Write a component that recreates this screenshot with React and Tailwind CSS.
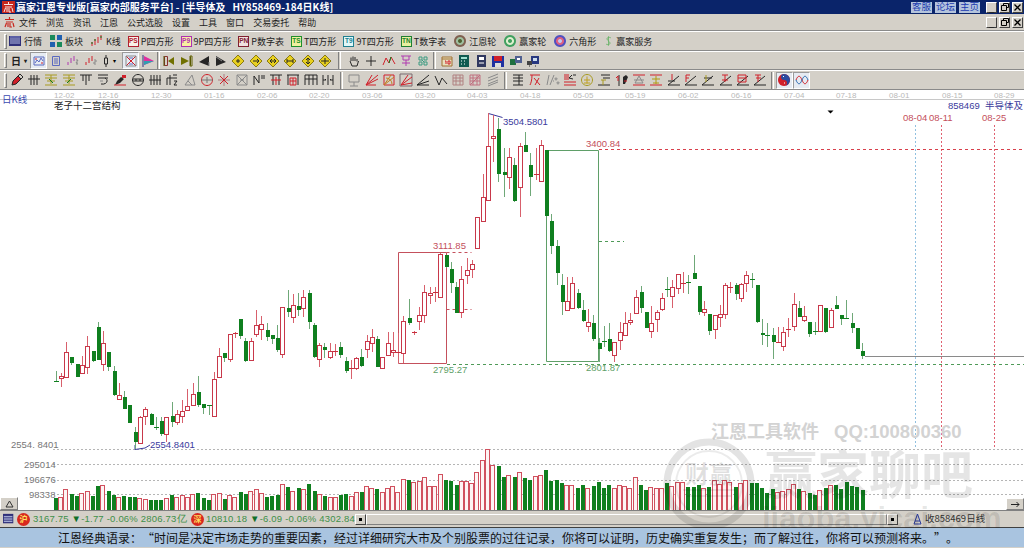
import React from 'react';

const R = '#d0202a', K = '#262626', Au = '#a89a20', G = '#8a8a8a', P = '#b07a80', Gn = '#0f7f1f', Y = '#e8d020';

// candles: [x, high, bodyTop, bodyBottom, low, colour] read off at the crop's origin
const place = (ox, oy, list) =>
  list.map(([x, hi, top, bot, lo, t]) => ({
    x: Math.round(ox + x / 3), hi: oy + hi / 3, top: oy + top / 3, bot: oy + bot / 3, lo: oy + lo / 3, t,
  }));

const candles = [
  ...place(40, 300, [
    [47, 212, 243, 245, 245, 'g'], [63, 220, 229, 235, 260, 'r'], [79, 126, 157, 233, 233, 'r'], [94, 170, 170, 188, 195, 'g'],
    [110, 193, 193, 232, 232, 'g'], [126, 168, 196, 221, 221, 'r'], [142, 108, 139, 201, 222, 'r'], [158, 153, 153, 183, 185, 'g'],
    [174, 65, 80, 180, 180, 'g'], [190, 92, 130, 192, 212, 'r'], [205, 155, 155, 200, 212, 'g'], [221, 198, 213, 284, 288, 'g'],
    [236, 248, 284, 295, 295, 'r'], [252, 272, 291, 326, 326, 'g'], [268, 315, 315, 368, 370, 'g'], [284, 380, 395, 426, 447, 'g'],
    [300, 348, 352, 430, 430, 'r'], [316, 322, 327, 349, 374, 'r'], [332, 340, 341, 373, 375, 'g'], [348, 352, 380, 381, 390, 'g'],
    [363, 352, 364, 402, 408, 'g'], [379, 350, 352, 402, 425, 'r'], [395, 307, 347, 364, 380, 'g'], [411, 330, 343, 368, 375, 'r'],
    [427, 300, 334, 350, 368, 'r'], [442, 267, 317, 330, 330, 'r'], [458, 248, 281, 313, 315, 'r'], [474, 228, 275, 315, 320, 'g'],
    [490, 311, 311, 323, 343, 'g'], [506, 316, 316, 320, 345, 'g'], [521, 216, 236, 346, 346, 'r'], [537, 145, 169, 231, 231, 'r'],
    [553, 160, 160, 175, 185, 'g'], [569, 103, 103, 179, 186, 'r'], [585, 95, 98, 99, 115, 'r'], [601, 58, 58, 108, 118, 'g'],
    [616, 115, 123, 184, 186, 'g'], [632, 115, 124, 181, 181, 'r'], [648, 30, 76, 104, 112, 'r'], [664, 47, 72, 88, 120, 'r'],
    [680, 70, 90, 110, 122, 'g'], [695, 105, 105, 118, 133, 'g'], [711, 76, 115, 150, 155, 'g'], [727, 22, 22, 163, 175, 'r'],
    [743, -30, 24, 36, 50, 'g'], [759, -18, 16, 52, 68, 'r'], [775, -20, 18, 30, 48, 'g'], [790, -30, -10, 24, 50, 'r'],
    [806, -30, -20, 68, 88, 'g'], [822, 68, 76, 172, 175, 'g'], [838, 130, 136, 177, 200, 'r'], [853, 128, 142, 152, 175, 'g'],
    [869, 128, 152, 170, 178, 'r'], [885, 133, 154, 155, 168, 'r'], [901, 125, 140, 163, 175, 'g'], [917, 172, 182, 213, 218, 'g'],
    [933, 180, 204, 205, 238, 'r'], [949, 172, 175, 205, 210, 'r'], [964, 148, 171, 197, 200, 'g'], [980, 105, 124, 149, 175, 'r'],
    [996, 88, 110, 128, 155, 'r'], [1011, 108, 117, 200, 200, 'g'], [1027, 170, 172, 206, 206, 'r'], [1043, 97, 130, 165, 165, 'r'],
    [1059, 97, 150, 156, 172, 'r'],
  ]),
  ...place(380, 105, [
    [54, 683, 741, 742, 775, 'r'], [70, 632, 648, 745, 775, 'r'], [86, 583, 638, 654, 660, 'g'], [102, 678, 680, 681, 690, 'r'],
    [118, 605, 629, 646, 675, 'r'], [133, 540, 562, 632, 655, 'r'], [149, 545, 564, 571, 597, 'r'], [165, 545, 560, 561, 592, 'r'],
    [181, 445, 448, 576, 578, 'r'], [197, 450, 450, 486, 490, 'g'], [213, 470, 492, 533, 563, 'g'], [228, 530, 546, 624, 624, 'g'],
    [244, 482, 523, 623, 640, 'r'], [260, 458, 496, 511, 538, 'r'], [276, 465, 478, 494, 518, 'r'], [292, 337, 337, 429, 429, 'r'],
    [308, 208, 275, 346, 346, 'r'], [324, 25, 122, 284, 284, 'r'], [340, 30, 94, 100, 170, 'r'], [355, 40, 72, 207, 230, 'g'],
    [371, 130, 200, 210, 275, 'g'], [387, 130, 157, 217, 252, 'r'], [403, 160, 181, 288, 290, 'g'], [419, 115, 124, 247, 335, 'r'],
    [435, 80, 121, 142, 142, 'g'], [451, 145, 180, 217, 272, 'g'], [467, 130, 206, 207, 225, 'r'], [482, 105, 119, 226, 226, 'r'],
    [498, 135, 135, 334, 334, 'g'], [514, 328, 347, 422, 448, 'g'], [530, 405, 424, 506, 540, 'g'], [545, 508, 540, 591, 630, 'g'],
    [561, 517, 587, 614, 618, 'r'], [577, 517, 535, 610, 612, 'r'], [593, 552, 564, 609, 612, 'g'], [608, 585, 614, 646, 650, 'g'],
    [624, 612, 652, 664, 682, 'r'], [640, 630, 655, 703, 708, 'g'], [656, 700, 715, 732, 770, 'g'],
  ]),
  ...place(600, 240, [
    [11, 258, 302, 306, 320, 'g'], [27, 250, 297, 333, 335, 'g'], [43, 307, 307, 347, 366, 'r'], [59, 247, 277, 302, 330, 'r'],
    [75, 215, 250, 287, 287, 'r'], [91, 220, 241, 248, 255, 'r'], [107, 150, 172, 221, 221, 'r'], [122, 138, 157, 204, 218, 'g'],
    [138, 215, 215, 262, 262, 'g'], [154, 198, 250, 275, 295, 'r'], [170, 210, 217, 239, 275, 'r'], [185, 160, 175, 209, 212, 'r'],
    [201, 110, 146, 149, 170, 'g'], [217, 120, 142, 169, 205, 'r'], [233, 103, 103, 146, 162, 'r'], [249, 95, 128, 129, 160, 'r'],
    [265, 105, 125, 129, 163, 'g'], [281, 45, 100, 118, 118, 'g'], [296, 139, 139, 216, 225, 'g'], [312, 182, 206, 214, 228, 'r'],
    [328, 222, 222, 273, 285, 'g'], [344, 225, 225, 268, 298, 'r'], [360, 195, 222, 230, 262, 'r'], [375, 128, 134, 221, 238, 'r'],
    [391, 125, 141, 142, 158, 'r'], [407, 128, 134, 162, 180, 'g'], [423, 128, 131, 172, 185, 'r'], [439, 92, 106, 131, 155, 'r'],
    [455, 100, 116, 117, 143, 'g'], [470, 136, 136, 248, 248, 'g'], [486, 238, 279, 286, 316, 'g'], [502, 250, 285, 290, 320, 'g'],
    [518, 265, 285, 306, 358, 'g'], [533, 260, 307, 308, 308, 'r'], [549, 262, 277, 319, 332, 'r'], [565, 233, 267, 268, 290, 'r'],
    [581, 160, 193, 260, 272, 'r'], [597, 182, 205, 231, 232, 'g'], [613, 197, 229, 241, 245, 'r'], [628, 245, 245, 280, 292, 'g'],
    [644, 245, 273, 274, 285, 'g'], [660, 195, 195, 272, 272, 'r'], [676, 204, 204, 277, 280, 'g'], [692, 205, 211, 263, 265, 'r'],
    [707, 168, 195, 208, 208, 'g'], [723, 225, 225, 236, 255, 'g'], [739, 180, 235, 236, 238, 'g'], [755, 218, 250, 266, 278, 'g'],
    [771, 263, 263, 326, 328, 'g'], [786, 310, 333, 347, 357, 'g'],
  ]),
];

const volumes = [
  ...[[167,235,'g'],[183,232,'r'],[199,208,'r'],[215,222,'g'],[231,228,'g'],[247,220,'r'],[263,213,'r'],[279,228,'g'],[294,197,'g'],[310,195,'r'],[326,213,'g'],[342,224,'g'],[358,232,'r'],[373,229,'g'],[389,232,'g'],[405,231,'g'],[421,233,'r'],[437,238,'r'],[452,240,'g'],[468,240,'g'],[484,240,'g'],[500,233,'r'],[516,226,'g'],[532,232,'r'],[548,226,'r'],[564,232,'r'],[580,223,'r'],[595,220,'g'],[611,235,'g'],[627,240,'g'],[643,223,'r'],[659,220,'r'],[675,236,'g'],[690,226,'r'],[706,232,'r'],[722,217,'g'],[738,222,'g'],[754,213,'r'],[770,206,'r'],[786,220,'r'],[801,232,'g'],[817,229,'g'],[833,225,'g'],[849,191,'r'],[865,202,'g'],[880,212,'r'],[896,204,'g'],[912,206,'r'],[928,193,'g'],[944,214,'g'],[960,223,'r'],[976,229,'g'],[992,232,'r'],[1008,232,'r'],[1023,226,'g'],[1039,222,'g'],[1055,229,'r'],[1070,217,'r'],[1085,217,'g'],[1100,197,'r'],[1116,203,'r'],[1132,208,'g'],[1148,215,'r'],[1164,203,'r'],[1180,199,'r'],[1195,215,'r'],[1211,178,'r'],[1227,180,'g'],[1243,187,'r'],[1259,182,'r'],[1275,170,'r'],[1290,199,'r'],[1306,199,'r'],[1322,161,'r'],[1338,181,'g'],[1354,184,'g'],[1370,195,'g'],[1386,184,'r'],[1402,182,'r'],[1417,190,'r'],[1432,155,'r'],[1448,121,'r'],[1464,88,'r'],[1480,136,'r'],[1496,139,'g'],[1512,170,'g'],[1528,164,'r']]
    .map(([x, y, t]) => ({ x: x / 3, y: 420 + y / 3, t })),
  ...[[8,230,'g'],[23,217,'r'],[39,235,'g'],[55,239,'g'],[71,228,'r'],[86,226,'r'],[102,210,'g'],[118,243,'g'],[134,239,'g'],[150,250,'g'],[166,255,'r'],[181,255,'r'],[197,263,'g'],[213,255,'g'],[229,265,'r'],[245,257,'g'],[260,246,'g'],[276,263,'g'],[292,255,'g'],[308,263,'r'],[323,255,'r'],[339,257,'r'],[355,263,'r'],[371,230,'r'],[387,255,'g'],[402,270,'g'],[418,260,'r'],[434,263,'r'],[450,265,'r'],[466,248,'g'],[481,257,'r'],[497,246,'r'],[513,247,'r'],[529,262,'g'],[545,262,'g'],[560,255,'g'],[576,263,'r'],[592,262,'g'],[608,241,'r'],[624,252,'r'],[640,241,'r'],[655,247,'r'],[671,260,'g'],[687,250,'r'],[703,241,'r'],[719,250,'g'],[735,250,'g'],[750,263,'g'],[766,278,'g'],[782,267,'g'],[798,277,'r'],[814,274,'r'],[830,267,'r'],[846,252,'r'],[861,268,'g'],[877,274,'r'],[893,280,'g'],[909,286,'g'],[925,271,'r'],[941,265,'g'],[957,255,'r'],[972,255,'g'],[988,268,'g'],[1004,246,'g'],[1020,259,'g'],[1036,262,'g'],[1052,270,'g']]
    .map(([x, y, t]) => ({ x: 512 + x / 3, y: 400 + y / 3, t })),
];

const dates = [
  ['12-02', 54], ['12-16', 98], ['12-30', 151], ['01-16', 204], ['02-06', 257], ['02-20', 309], ['03-06', 362], ['03-20', 415], ['04-03', 467], ['04-18', 520],
  ['05-05', 573], ['05-19', 625], ['06-02', 678], ['06-16', 731], ['07-04', 784], ['07-18', 836], ['08-01', 889], ['08-15', 942], ['08-29', 994],
];

// small toolbar drawings: [path, colour, filled]
const Ic = ({ s, w = 14 }) => (
  <svg width={w} height="14" viewBox="0 0 14 14" fill="none" className="shrink-0">
    {s.map(([d, c, f], i) => (
      <path key={i} d={d} stroke={f ? 'none' : c} fill={f ? c : 'none'} />
    ))}
  </svg>
);

const row3 = [
  [[ 'M2 3h10v8H2z', '#5a6ac0' ], [ 'M3 9l2-3 2 2 2-4 2 3', '#5a6ac0' ], [ 'M3 5h2M9 9h2', R ]],
  [[ 'M3.5 2.5h7v9h-7z', '#5a6ac0' ], [ 'M5 5h4M5 7h4M5 9h4', '#5a6ac0' ]],
  [[ 'M2 11V8M5 9V4M8 7V2', '#b03ab0' ], [ 'M10 6h2l-2 3h2M10 10h2', G ]],
  [[ 'M2 11V8M5 9V4M8 7V2', R ], [ 'M10 6h2v2h-2v2h2', G ]],
];
const row3b = [
  [[ 'M2.5 2.5h3v9h-3z', '#8a3030' ], [ 'M6 7l6-4v8z', '#707000', true ], [ 'M2 2v10', '#505000' ]],
  [[ 'M11.5 2.5v9', '#505000' ], [ 'M2 3l8 4-8 4z', '#707000', true ], [ 'M11 2h2v10h-2z', '#606000' ]],
  [[ 'M12 2v10L2 8z', K, true ], [ 'M12 8v4', G ]],
  [[ 'M2 2v10l10-4z', K, true ], [ 'M2 3l6 4', G ]],
];
const diamond = inner => [[ 'M7 1l6 6-6 6-6-6z', Y, true ], [ 'M7 1l6 6-6 6-6-6z', '#8a7a10' ], [ inner, K ]];
const row3c = [
  diamond('M5 7h4M7 5v4'), diamond('M4 7h6M8 5l2 2-2 2'), diamond('M4 7h6M6 5L4 7l2 2M8 5l2 2-2 2'),
  diamond('M4 5v4M10 5v4M4 7h6'), diamond('M7 4v6M5 6l2-2 2 2M5 8l2 2 2-2'), diamond('M3 7h8M7 4v6'),
];
const row3d = [
  [[ 'M4 7V3.5M6 7V2.5M8 7V3M10 7.5V5M3 7l2 5h5l1.500-5', K ]],
  [[ 'M7 2v10M2 7h10', K ]],
  [[ 'M1 11l3-7 3 5 2-6 4 7', R ], [ 'M7 9l2-6', Gn ]],
  [[ 'M2 2h10M4 2v4h6V2M7 6v6M3 9h8', '#b03ab0' ]],
  [[ 'M3 3h3v3H3zM8 3h3v3H8zM3 8h3v3H3zM8 8h3v3H8z', '#3a9a80' ], [ 'M6 6l2 2', '#3a9a80' ]],
];
const row3e = [
  [[ 'M2 3h10v9H2z', '#e8e0c0', true ], [ 'M2 3h10v9H2zM2 5h10', '#a07030' ], [ 'M5 7h1v3M8 7h2v3H8z', R ]],
  [[ 'M2 1h10v12H2z', '#105a50', true ], [ 'M4 3h6v2H4z', '#a0e0d0', true ], [ 'M4 7h1M7 7h1M10 7h0M4 10h1M7 10h1', '#fff' ]],
  [[ 'M3 1h9v12H3z', '#303860', true ], [ 'M5 3h5v3H5z', '#fff', true ], [ 'M5 9h5', '#fff' ]],
  [[ 'M1 2h12v11H1z', '#2030a0', true ], [ 'M3 2h8v5H3z', R, true ], [ 'M4 9h6v4H4z', '#ddd', true ]],
  [[ 'M1 5h6v6H1z', '#207040', true ], [ 'M6 2h7v7H6z', '#506090', true ], [ 'M8 4h3v2H8z', '#fff', true ]],
  [[ 'M5 2h8v8H5z', '#283880', true ], [ 'M7 4h4v3H7z', '#cde', true ], [ 'M1 7h5v4H1z', '#444', true ], [ 'M3 12h1M9 12h1', K ]],
];
const row4a = [
  [[ 'M2 12l1-4 5-5 3 3-5 5z', R, true ], [ 'M2 12l1-4 5-5 3 3-5 5zM8 3l2-2 3 3-2 2', K ]],
  [[ 'M4 2v10M7 2v10M10 2v10M1 6h12', K ]],
  [[ 'M1 2h12M1 5h12M7 2v9M3 8h8M1 12h12', Au ], [ 'M5 6l4 4', Gn ]],
  [[ 'M1 2h12M1 5h12M7 2v9M3 8h8M1 12h12', Au ], [ 'M9 6l-4 4', Gn ]],
  [[ 'M1 2h12M4 2v6M7 2v10M10 2v6', K ]],
  [[ 'M2 2h10M2 5h10M9 5c4 2 2 7-4 6', K ], [ 'M4 8h3', G ]],
  [[ 'M2 12l2-4 4-4 3 2-4 4z', K, true ], [ 'M9 2h4v3H9z', R, true ], [ 'M1 12h12', R ]],
  [[ 'M7 1.500a5.500 5.500 0 1 0 .01 0zM2 6h10M2 8h10M5 6v2M9 6v2', K ]],
  [[ 'M3 2v10M6 2v10M9 2v10M12 2v10M1 7h12', K ]],
  [[ 'M2 5v7M5 2v10M8 2h4M8 5h4M2 5h6', K ], [ 'M9 8h3l-3 4h3', K ]],
  [[ 'M2 12L9 2l3 10zM5 8l4 4', G ]],
];
const row4b = [
  [[ 'M7 1.500a5.500 5.500 0 1 0 .01 0z', R ], [ 'M1 7h12M7 4v6', '#777' ]],
  [[ 'M7 1v12M1 7h12', P ], [ 'M3 3l8 8M11 3l-8 8', R ]],
  [[ 'M2 2h10v10H2z', G ], [ 'M2 2l10 10M12 2L2 12M5 7h4', G ]],
  [[ 'M2 12V3l5 7V2', K ], [ 'M10 2v4M12 2v4', K ]],
  [[ 'M1 2h12M4 2v10M10 2v10', K ], [ 'M2 7h10M7 4v8', R ]],
  [[ 'M1 2h12M2 2v10M12 2v10', K ], [ 'M4 5h6v7H4zM4 8h6M7 5v7', R ]],
  [[ 'M1 2h12v10M1 2v10M1 6h12M5 2v10M9 2v10', K ]],
  [[ 'M2 2v10M12 2v10M7 2v10M2 7h3l-1-1M12 7H9l1-1', K ]],
];
const row4c = [
  [[ 'M2 2h10v7H2zM7 9v4M3 13h8', G ]],
  [[ 'M1 12L13 2M1 12L13 6M1 12L11 12M1 12L7 2', R ]],
  [[ 'M2 2h10v10H2z', R ], [ 'M2 12L12 4M2 12L9 2M4 5a6 6 0 0 1 6 6', '#c08020' ]],
  [[ 'M1 1h12v12H1z', '#7a6a70' ], [ 'M2 12L13 4M2 12L9 2M2 12l11-2', R ]],
  [[ 'M1 12L13 2M1 12L13 8M1 12h12', K ]],
  [[ 'M1 3l4 9 3-7 5 6', K ]],
  [[ 'M2 2h10v10H2zM2 5h10M2 8h10M5 2v10M9 2v10', '#b08080' ]],
  [[ 'M2 2h10v10H2zM2 5h10M2 8h10M5 2v10M9 2v10', '#c07080' ], [ 'M2 12L12 2', '#c07080' ]],
  [[ 'M2 5L12 1M2 8L12 4M2 11L12 7M2 13l10-4', G ]],
];
const slant = (c1, c2) => [[ 'M1 12h12M1 12L12 3M3 5h8', c1 ], [ 'M5 2v7', c2 ]];
const row4d = [
  [[ 'M2 2h10M2 5h10M2 8h10M2 12h10M8 2v10', K ]],
  [[ 'M2 2h10M4 2c0 5-1 8-2 10M6 5l6 7M11 5l-4 7', R ]],
  [[ 'M3 2l-2 10M8 2l-4 10', G ], [ 'M7 8h1M10 5a1 1 0 1 0 .01 0zM12 9a1 1 0 1 0 .01 0z', G ]],
  [[ 'M1 2h5M1 4h5M1 6h5M1 12h12M1 9h12', R ], [ 'M9 2L6 5l4 1', K ], [ 'M10 2h3', K ]],
  [[ 'M7 1.500a5.500 5.500 0 1 0 .01 0z', Au ], [ 'M7 3.500v7M4 7h6M4 10h6', '#c0a020' ]],
  [[ 'M4 2h9M6 5h7M1 12h12', K ], [ 'M4 7h5M6 7v5', Au ]],
  [[ 'M4 2v11', K ], [ 'M8 4l3-2 2 2-3 7H8z', K, true ], [ 'M1 5l2-2v5', R ], [ 'M9 8h3', R ]],
  [[ 'M1 2h12M1 12h12', R ], [ 'M7 3L3 10h8zM2 7h10', G ]],
  [[ 'M1 12h12M1 2h12', R ], [ 'M7 3v8M3 6h8M4 10h6', '#b09a10' ]],
  [[ 'M1 12L12 3M1 12h12M1 8h7', K ], [ 'M5 1v6', R ]],
  [[ 'M1 12L12 3M1 12h12', K ], [ 'M2 2v7M2 2h4M2 5h3', R ]],
  slant(K, Au),
  [[ 'M1 12L12 3M1 12h12', K ], [ 'M3 2h6M6 2v7M3 7h6', R ]],
  [[ 'M1 12L12 3M1 12h12', K ], [ 'M2 2h8v7H2zM2 5h8', R ]],
  [[ 'M1 12L12 3M1 12h12', K ], [ 'M2 2h6M5 2v7M3 5h5', R ]],
];

const Cell = ({ s, pressed, className = 'w-[17.3px]' }) => (
  <div className={`${className} h-[17px] flex items-center justify-center shrink-0 ${pressed ? 'bg-[#e6ebf2] border border-t-[#9a9a9a] border-l-[#9a9a9a] border-r-white border-b-white' : ''}`}>
    <Ic s={s} />
  </div>
);

const Grip = () => <div className="w-[3px] h-[15px] ml-[4px] mr-[1px] border border-t-white border-l-white border-r-[#808080] border-b-[#808080] shrink-0" />;
const Sep = ({ className }) => <div className={`${className} h-[17px] flex justify-center shrink-0`}><div className="w-[3px] h-full border-l border-r border-l-[#808080] border-r-white" /></div>;

const BoxIcon = ({ label, color, bg }) => (
  <div className="w-[11px] h-[11px] border flex items-center justify-center text-[6.500px] font-bold leading-none font-['Liberation_Sans']" style={{ borderColor: color, color, backgroundColor: bg }}>
    {label}
  </div>
);

const Tool = ({ icon, label }) => (
  <div className="flex items-center gap-[2px] shrink-0">
    {icon}
    <span className="text-[9px] leading-none text-[#222]">{label}</span>
  </div>
);

const WinBtn = ({ children, className = 'w-[11px]' }) => (
  <div className={`${className} h-[11px] bg-[#d4d0c8] border border-t-white border-l-white border-r-[#404040] border-b-[#404040] flex items-center justify-center text-[9px] leading-none font-bold text-black font-['Liberation_Sans']`}>
    {children}
  </div>
);

const WinButtons = () => (
  <div className="flex gap-[2px]">
    <WinBtn><span className="mt-[5px]">_</span></WinBtn>
    <WinBtn>
      <svg width="8" height="8" viewBox="0 0 8 8" fill="none"><path d="M2.500 2.500v-2h5v4h-2M.5 2.500h5v5h-5z" stroke="#000" /></svg>
    </WinBtn>
    <WinBtn>
      <svg width="7" height="7" viewBox="0 0 7 7" fill="none"><path d="M.5.5l6 6M6.500.5l-6 6" stroke="#000" strokeWidth="1.300" /></svg>
    </WinBtn>
  </div>
);

const LogoMark = ({ solid }) => (
  <svg width="13" height="12" viewBox="0 0 13 12" fill="none" className="shrink-0">
    {solid && <path d="M0 0h13v12H0z" fill="#c8281e" />}
    <path d="M6.500 1v2M2 3.500h9M3 6h7M2 11l1.500-4M5 7v4M7 7v4h2M10 7l1 4" stroke={solid ? '#fff' : '#c8281e'} strokeWidth={solid ? '.9' : '1.200'} />
  </svg>
);

const Chart = () => (
  <svg viewBox="0 90 1024 420" className="block w-[1024px] h-[420px]">
    {dates.map(([d, x]) => (
      <text key={d} x={x} y="97.500" fontSize="8" fill="#b9b9b9" fontFamily="Liberation Sans">{d}</text>
    ))}
    <path d="M0 99.500h1024" stroke="#c8c8c8" />

    {/* dashed guides */}
    <g stroke="#b5b5b5" strokeDasharray="2 2">
      <path d="M53 449.500h971M53 464.500h971M53 480.500h971M53 494.500h971" />
    </g>
    <path d="M915.500 125v324" stroke="#90c0e0" strokeDasharray="2 2" />
    <path d="M941.500 125v324M994.500 125v324" stroke="#e06070" strokeDasharray="2 2" />

    {/* boxes from the highs and lows */}
    <path d="M398.500 252.500h48v111h-48z" stroke="#c4505c" fill="none" />
    <path d="M446.500 252.500h25M446.500 309.500h25" stroke="#c4505c" strokeDasharray="3 3" />
    <path d="M546.500 150.500h52v211h-52z" stroke="#5f9f68" fill="none" />
    <path d="M599 149.500h425" stroke="#d8404c" strokeDasharray="3 3" />
    <path d="M599 241.500h25" stroke="#4f9a58" strokeDasharray="3 3" />
    <path d="M447 364.500h577" stroke="#4f9a58" strokeDasharray="3 3" />
    <path d="M865 356.500h159" stroke="#8a8a8a" />
    <path d="M488.500 113.500l14 4" stroke="#3a3a9c" fill="none" />
    <path d="M135 445v4.500l10-1.500 5-3" stroke="#3a3a9c" fill="none" />

    {candles.map((c, i) => {
      const red = c.t === 'r';
      const doji = c.bot - c.top < 2;
      return (
        <g key={i} shapeRendering="crispEdges">
          <path d={`M${c.x + 0.5} ${c.hi}V${c.lo}`} stroke={red ? '#d8606c' : '#6fa878'} />
          {doji ? (
            <path d={`M${c.x - 2} ${Math.round(c.top) + 0.5}h5`} stroke={red ? '#c82c3a' : '#0f7f1f'} />
          ) : red ? (
            <rect x={c.x - 1.5} y={Math.round(c.top) + 0.5} width="4" height={Math.round(c.bot - c.top)} fill="#fff" stroke="#c8384a" />
          ) : (
            <rect x={c.x - 1.5} y={Math.round(c.top)} width="4" height={Math.round(c.bot - c.top)} fill="#0f7f1f" />
          )}
        </g>
      );
    })}

    {volumes.map((v, i) =>
      v.t === 'r' ? (
        <rect key={i} x={Math.round(v.x) - 2.5} y={Math.round(v.y) + 0.5} width="4" height={509.500 - Math.round(v.y)} fill="#fdf4f4" stroke="#d0505e" shapeRendering="crispEdges" />
      ) : (
        <rect key={i} x={Math.round(v.x) - 2} y={Math.round(v.y)} width="4" height={510 - Math.round(v.y)} fill="#0f7f1f" shapeRendering="crispEdges" />
      )
    )}

    <g fontFamily="Liberation Sans" fontSize="9.500">
      <text x="433" y="249" fill="#c4505c">3111.85</text>
      <text x="433" y="373" fill="#5f9f68">2795.27</text>
      <text x="586" y="147" fill="#c4505c">3400.84</text>
      <text x="586" y="371" fill="#5f9f68">2801.87</text>
      <text x="503" y="125" fill="#3a3a9c">3504.5801</text>
      <text x="150" y="448" fill="#3a3a9c">2554.8401</text>
      <text x="903" y="121" fill="#c4505c">08-04</text>
      <text x="929" y="121" fill="#c4505c">08-11</text>
      <text x="982" y="121" fill="#c4505c">08-25</text>
      <text x="948" y="109" fill="#3a3a9c">858469</text>
      <text x="11" y="448" fill="#777">2554. 8401</text>
      <text x="24" y="468" fill="#777">295014</text>
      <text x="24" y="483" fill="#777">196676</text>
      <text x="29" y="498" fill="#777">98338</text>
    </g>
    <g fontFamily="Noto Sans CJK SC" fontSize="9.500">
      <text x="2" y="103" fill="#3a4ab0">日K线</text>
      <text x="54" y="109" fill="#222">老子十二宫结构</text>
      <text x="985" y="109" fill="#3a3a9c">半导体及</text>
    </g>
    <path d="M827.500 110.500h6l-3 3z" fill="#000" />
  </svg>
);

const Quote = ({ text, bg }) => (
  <div className={`w-[13px] h-[13px] rounded-full ${bg} flex items-center justify-center text-[8px] leading-none font-bold text-[#ffe060] shrink-0`}>
    {text}
  </div>
);

const StatText = ({ children, className = '' }) => (
  <span className={`text-[#3f8f48] text-[9.500px] leading-none tracking-[0.2px] font-['Liberation_Sans'] whitespace-nowrap ${className}`}>{children}</span>
);

const ScrollBtn = ({ children }) => (
  <div className="w-[11px] h-[11px] bg-[#d4d0c8] border border-t-white border-l-white border-r-[#404040] border-b-[#404040] flex items-center justify-center shrink-0">{children}</div>
);

export default function App() {
  return (
    <div className="relative w-[1024px] h-[548px] overflow-hidden flex flex-col bg-[#d4d0c8] font-['Noto_Sans_CJK_SC',sans-serif]">
      {/* title bar */}
      <div className="h-[14px] bg-[#0a246a] flex items-center pl-[2px] pr-[1px] shrink-0">
        <LogoMark solid />
        <span className="ml-[1px] text-white text-[10px] font-bold leading-none whitespace-pre">赢家江恩专业版[赢家内部服务平台] - [半导体及   HY858469-184日K线]</span>
        <div className="ml-auto flex items-center">
          <div className="flex gap-[3px] mr-[6px]">
            {['客服', '论坛', '主页'].map(t => (
              <div key={t} className="w-[21px] h-[11px] bg-[#b4c4dc] flex items-center justify-center text-[9.500px] leading-none text-[#1a3ab0]">{t}</div>
            ))}
          </div>
          <WinButtons />
        </div>
      </div>

      {/* menu */}
      <div className="h-[17px] flex items-center pl-[3px] pr-[1px] border-b border-b-[#8a8a8a] shrink-0">
        <LogoMark />
        <div className="flex gap-[9px] ml-[3px] text-[9px] leading-none text-[#222]">
          {['文件', '浏览', '资讯', '江恩', '公式选股', '设置', '工具', '窗口', '交易委托', '帮助'].map(t => (
            <span key={t}>{t}</span>
          ))}
        </div>
        <div className="ml-auto"><WinButtons /></div>
      </div>

      {/* text toolbar */}
      <div className="h-[20px] flex items-center border-t border-t-white border-b border-b-[#8a8a8a] shrink-0">
        <Grip />
        <div className="flex items-center gap-[7px]">
          <Tool label="行情" icon={<Ic s={[[ 'M1 2h12v10H1z', '#30307a', true ], [ 'M2 5h10M2 7h10M2 9h10', '#b0b8e0' ], [ 'M2 3h10', '#8890d0' ]]} />} />
          <Tool label="板块" icon={<Ic s={[[ 'M1 1h5v5H1z', '#1a8a5a', true ], [ 'M8 1h5v5H8z', '#2060b0', true ], [ 'M1 8h5v5H1z', '#2060b0', true ], [ 'M8 8h5v5H8z', '#1a8a5a', true ]]} />} />
          <Tool label="K线" icon={<Ic s={[[ 'M2 8v4M5 5v6M8 3v6M11 1v5', R ], [ 'M1 9h2M4 6h2M10 3h2', Gn ]]} />} />
          <Tool label="P四方形" icon={<BoxIcon label="PS" color="#b02030" bg="#f8f0e8" />} />
          <Tool label="9P四方形" icon={<BoxIcon label="P9" color="#b030b0" bg="#f8f0a0" />} />
          <Tool label="P数字表" icon={<BoxIcon label="PN" color="#802030" bg="#f0e0e0" />} />
          <Tool label="T四方形" icon={<BoxIcon label="TS" color="#20902a" bg="#f0f0a0" />} />
          <Tool label="9T四方形" icon={<BoxIcon label="T9" color="#208090" bg="#e0f8f8" />} />
          <Tool label="T数字表" icon={<BoxIcon label="TN" color="#208030" bg="#e8f0a0" />} />
          <Tool label="江恩轮" icon={<Ic s={[[ 'M7 1a6 6 0 1 0 .01 0z', '#806050', true ], [ 'M7 3a4 4 0 1 0 .01 0z', '#a0c0a0', true ], [ 'M7 5a2 2 0 1 0 .01 0z', '#506030', true ]]} />} />
          <Tool label="赢家轮" icon={<Ic s={[[ 'M7 1a6 6 0 1 0 .01 0z', '#40a060', true ], [ 'M7 3a4 4 0 1 0 .01 0z', '#e0f0d0', true ], [ 'M7 5a2 2 0 1 0 .01 0z', '#40a060', true ]]} />} />
          <Tool label="六角形" icon={<Ic s={[[ 'M7 1a6 6 0 1 0 .01 0z', '#5050c0', true ], [ 'M7 3a4 4 0 1 0 .01 0z', '#e06080', true ], [ 'M7 5a2 2 0 1 0 .01 0z', '#c0c8f0', true ]]} />} />
          <Tool label="赢家服务" icon={<Ic s={[[ 'M10 3C6 1 3 4 7 7s1 6-3 4M7 1v12', '#60b060' ]]} w={11} />} />
        </div>
      </div>

      {/* period and drawing toolbar */}
      <div className="h-[19px] flex items-center border-t border-t-white border-b border-b-[#8a8a8a] shrink-0">
        <Grip />
        <div className="w-[22px] flex items-center justify-center gap-[3px] text-[10px] leading-none font-bold text-[#222] shrink-0">
          日<span className="text-[6px]">▾</span>
        </div>
        <Cell s={row3[0]} pressed />
        {row3.slice(1).map((s, i) => <Cell key={i} s={s} />)}
        <div className="w-[20px] flex items-center shrink-0 h-[17px]">
          <Ic s={[[ 'M7 1v3M7 10v3', K ], [ 'M5.500 4h3v6h-3z', K ]]} />
          <span className="text-[6px] leading-none">▾</span>
        </div>
        <Cell className="w-[17px] ml-[3px]" pressed s={[[ 'M2 2l10 10M12 2L2 12', R ], [ 'M2 2h10v10H2z', G ], [ 'M5 4h4M5 10h4', '#5a6ac0' ]]} />
        <Cell s={[[ 'M2 1v12', '#303080' ], [ 'M3 2l10 5-10 4z', '#e030a0', true ], [ 'M3 7h10l-10 4z', '#30a0b0', true ]]} />
        <Sep className="w-[4px]" />
        {row3b.map((s, i) => <Cell key={i} s={s} />)}
        {row3c.map((s, i) => <Cell key={i} s={s} />)}
        <Sep className="w-[12px]" />
        {row3d.map((s, i) => <Cell key={i} s={s} />)}
        <Sep className="w-[6px]" />
        {row3e.map((s, i) => <Cell key={i} s={s} />)}
      </div>

      {/* indicator toolbar */}
      <div className="h-[20px] flex items-center border-t border-t-white border-b border-b-[#8a8a8a] shrink-0">
        <Grip />
        {[...row4a, ...row4b].map((s, i) => <Cell key={i} s={s} />)}
        <Sep className="w-[9px]" />
        {row4c.map((s, i) => <Cell key={i} s={s} />)}
        <Sep className="w-[8px]" />
        {row4d.map((s, i) => <Cell key={i} s={s} />)}
        <Sep className="w-[7px]" />
        <Cell pressed s={[[ 'M7 1a6 6 0 1 0 .01 0z', R, true ], [ 'M7 1a6 6 0 0 1 0 12 3 3 0 0 0 0-6 3 3 0 0 1 0-6z', '#2a4aa0', true ], [ 'M6 3.500h1M7 10h1', '#fff' ]]} />
        <Cell pressed s={[[ 'M1 7c2-5 4-5 6 0s4 5 6 0', R ], [ 'M1 7c2 5 4 5 6 0s4-5 6 0', '#2a6ab0' ]]} />
      </div>

      {/* chart */}
      <div className="relative h-[420px] bg-white shrink-0">
        <Chart />
        <div className="absolute left-0 bottom-0 w-[18px] h-[13px] bg-[#d4d0c8] border border-t-white border-l-white border-r-[#808080] border-b-[#808080] flex items-center justify-center">
          <svg width="9" height="8" viewBox="0 0 9 8" fill="none"><path d="M4.500 1L8 7H1z" stroke="#333" /></svg>
        </div>
        <div className="absolute right-0 bottom-0 w-[18px] h-[12px] bg-[#d4d0c8] border border-t-white border-l-white border-r-[#808080] border-b-[#808080] flex items-center justify-center">
          <svg width="9" height="7" viewBox="0 0 9 7" fill="none"><path d="M0 3.500h8M5.500 1L8 3.500 5.500 6" stroke="#222" /></svg>
        </div>
      </div>

      {/* status bar */}
      <div className="h-[18px] flex items-center border-t border-t-[#808080] border-b border-b-[#404040] pl-[3px] shrink-0">
        <div className="shrink-0 mr-[2px]">
          <Ic w={12} s={[[ 'M0 1h12v11H0z', '#30307a', true ], [ 'M1 4h10M1 6h10M1 8h10M1 10h10', '#c0c8e8' ]]} />
        </div>
        <Quote text="沪" bg="bg-[#d8281e]" />
        <StatText className="ml-[3px] w-[158px]">3167.75 <span className="text-[#0f6f28]">▼</span>-1.77 -0.06% 2806.73亿</StatText>
        <Quote text="深" bg="bg-[#d8281e]" />
        <StatText className="ml-[2px] w-[149px]">10810.18 <span className="text-[#0f6f28]">▼</span>-6.09 -0.06% 4302.84</StatText>
        <div className="w-[543px] h-[11px] flex items-center bg-[#e4e1da] shrink-0">
          <ScrollBtn><span className="w-[3px] h-[3px] bg-black" /></ScrollBtn>
          <div className="h-[11px] flex-1 bg-[#d4d0c8] border border-t-white border-l-white border-r-[#808080] border-b-[#808080]" />
          <ScrollBtn><span className="w-[3px] h-[3px] bg-black" /></ScrollBtn>
        </div>
        <svg width="9" height="12" viewBox="0 0 9 12" fill="none" className="ml-[15px] shrink-0">
          <path d="M4.500 1L1 11h7z" stroke="#2a3a9c" />
          <path d="M2 8h5" stroke="#2a3a9c" />
        </svg>
        <span className="ml-[3px] text-[9.500px] leading-none text-[#333]">收858469日线</span>
      </div>

      {/* quote line */}
      <div className="relative z-10 h-[19px] bg-[#a9c4e0] flex items-center pl-[58px] shrink-0">
        <span className="text-[12px] leading-none text-[#111] whitespace-nowrap [text-spacing-trim:space-all]">江恩经典语录：“时间是决定市场走势的重要因素，经过详细研究大市及个别股票的过往记录，你将可以证明，历史确实重复发生；而了解过往，你将可以预测将来。”。</span>
      </div>

      {/* watermark sits over the chart and status bar */}
      <div className="absolute left-[711px] top-[419px] text-[18px] leading-[22px] font-bold text-[#d3d3d3] whitespace-pre pointer-events-none">江恩工具软件<span className="ml-[15px] text-[18.500px] font-['Liberation_Sans']">QQ:100800360</span></div>
      <div className="absolute left-[765px] top-[443px] text-[52px] leading-[58px] font-bold text-black/10 whitespace-nowrap pointer-events-none">赢家聊吧</div>
      <div className="absolute left-[762px] top-[504px] text-[31px] leading-[30px] font-bold text-black/10 whitespace-nowrap pointer-events-none font-['Liberation_Sans']">jiaoba.yicai.com</div>
      <svg width="96" height="96" viewBox="0 0 96 96" fill="none" className="absolute left-[661px] top-[436px] pointer-events-none">
        <circle cx="48" cy="48" r="42" stroke="#000" strokeOpacity=".11" strokeWidth="7" />
        <circle cx="48" cy="48" r="33" stroke="#000" strokeOpacity=".08" strokeWidth="2" />
        <text x="48" y="47" textAnchor="middle" fontSize="24" fontWeight="700" fontFamily="Noto Sans CJK SC" fill="#000" fillOpacity=".12">财赢</text>
        <path d="M22 54h52M26 60h44" stroke="#000" strokeOpacity=".08" strokeWidth="2" />
      </svg>
    </div>
  );
}
